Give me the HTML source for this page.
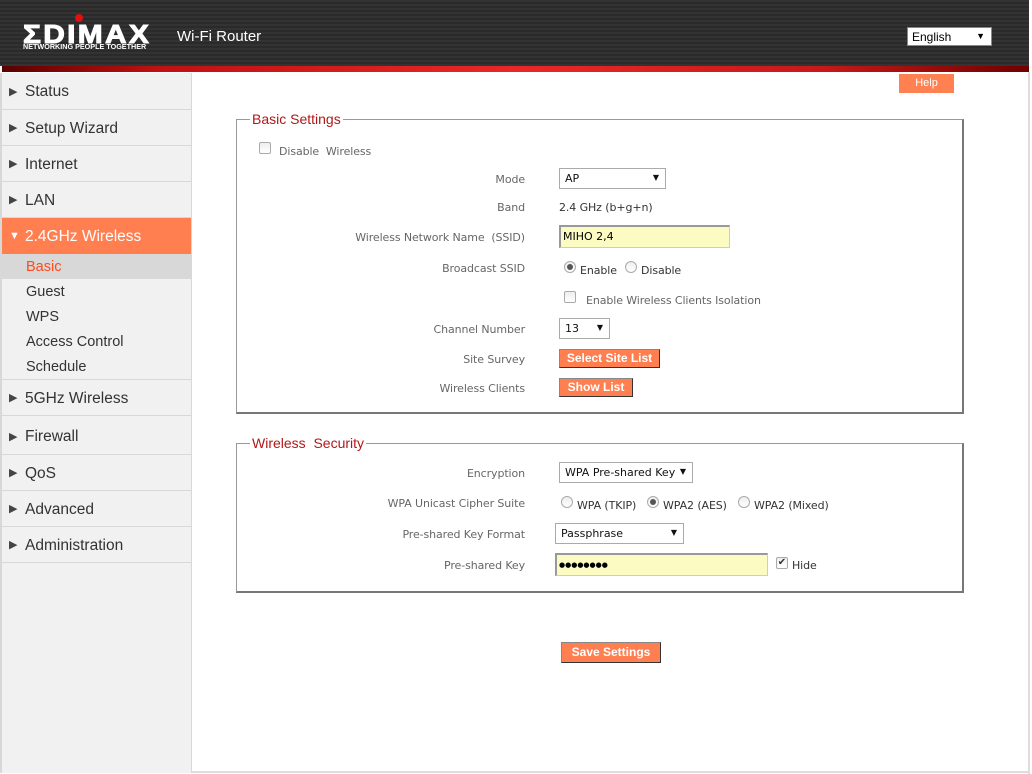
<!DOCTYPE html>
<html><head><meta charset="utf-8"><style>
*{margin:0;padding:0;box-sizing:border-box}
body{width:1032px;height:774px;background:#fff;position:relative;overflow:hidden;font-family:"DejaVu Sans","Liberation Sans",sans-serif}
.a{position:absolute}
#hdr{left:0;top:0;width:1029px;height:66px;background:repeating-linear-gradient(180deg,#333 0,#333 2px,#2a2a2a 2px,#2a2a2a 4px)}
#red{left:2px;top:66px;width:1027px;height:6px;background:linear-gradient(90deg,#5a0000 0,#c01010 15%,#e82828 50%,#c81818 80%,#700000 100%)}
#side{left:0;top:73px;width:192px;height:700px;background:#f1f1f1;border-right:1px solid #d8d8d8;border-left:2px solid #d8d8d8}
.nav{position:absolute;left:2px;width:189px;font-family:"Liberation Sans",sans-serif;font-size:15.5px;color:#333;border-bottom:1px solid #d8d8d8}
.nav span.t{position:absolute;left:7px;font-size:11px;color:#444}
.sub{position:absolute;left:26px;font-family:"Liberation Sans",sans-serif;font-size:14.5px;color:#333}
.lbl{position:absolute;right:507px;font-size:11px;color:#666;white-space:nowrap;letter-spacing:-.1px}
.val{position:absolute;font-size:11px;color:#333;white-space:nowrap;letter-spacing:-.1px}
.fs{position:absolute;border:2px solid #8a8a8a;border-top-width:1px;border-left-width:1px;border-color:#999 #777 #777 #999}
.leg{position:absolute;background:#fff;color:#b01818;font-size:14px;font-family:"Liberation Sans",sans-serif;padding:0 2px}
.sel{position:absolute;border:1px solid #aaa;background:#fff;font-size:11px;color:#111;padding:3px 5px;height:21px}
.sel:after{content:"▼";position:absolute;right:6px;top:4px;font-size:8px}
.btn{position:absolute;background:#ff7f50;color:#fff;font-weight:bold;text-align:center;border:1px solid #888;border-right-color:#333;border-bottom-color:#333;line-height:17px;font-family:"Liberation Sans",sans-serif;font-size:12px}
.rad{position:absolute;width:12px;height:12px;border-radius:50%;border:1px solid #aaa;background:linear-gradient(#eee,#fff)}
.rad.on:after{content:"";position:absolute;left:2px;top:2px;width:6px;height:6px;border-radius:50%;background:#555}
.cb{position:absolute;width:12px;height:12px;border:1px solid #aaa;border-radius:2px;background:linear-gradient(#eee,#fff)}
.inp{position:absolute;background:#fbfbc2;border:1px solid #ccc;border-top:2px solid #999;border-left:2px solid #999;font-size:11px;padding:3px 2px;height:23px}
</style></head><body>
<div id="hdr" class="a"></div>
<div id="red" class="a"></div>
<div class="a" style="left:23px;top:21px;color:#fff;font-family:'Liberation Sans',sans-serif;font-weight:900;font-size:26px;letter-spacing:2px;line-height:26px;transform:scaleX(1.15);transform-origin:left;-webkit-text-stroke:1px #fff">ΣDIMAX</div>
<div class="a" style="left:75px;top:14px;width:8px;height:8px;border-radius:50%;background:#e01010"></div>
<div class="a" style="left:23px;top:44px;color:#fff;font-family:'Liberation Sans',sans-serif;font-weight:bold;font-size:7px;letter-spacing:0px;transform:scaleX(1.03);transform-origin:left">NETWORKING PEOPLE TOGETHER</div>
<div class="a" style="left:177px;top:28px;color:#fff;font-family:'Liberation Sans',sans-serif;font-size:15px">Wi-Fi Router</div>
<div class="a" style="left:907px;top:27px;width:85px;height:19px;background:#fff;border:1px solid #888;padding:2px 4px;font-family:'Liberation Sans',sans-serif;font-size:12px">English<span style="position:absolute;right:6px;top:3px;font-size:9px">▼</span></div>
<div class="btn a" style="left:899px;top:74px;width:55px;height:19px;border:none;font-weight:normal;font-size:11px;line-height:19px;background:#ff8050">Help</div>
<div class="a" style="left:1028px;top:72px;width:2px;height:702px;background:#ddd"></div>
<div class="a" style="left:0;top:771px;width:1030px;height:2px;background:#ddd"></div>

<div id="side" class="a"></div>
<div class="nav" style="top:73px;height:37px;line-height:38px"><span class="t">▶</span><span style="margin-left:23px">Status</span></div>
<div class="nav" style="top:110px;height:36px;line-height:37px"><span class="t">▶</span><span style="margin-left:23px">Setup Wizard</span></div>
<div class="nav" style="top:146px;height:36px;line-height:37px"><span class="t">▶</span><span style="margin-left:23px">Internet</span></div>
<div class="nav" style="top:182px;height:36px;line-height:37px"><span class="t">▶</span><span style="margin-left:23px">LAN</span></div>
<div class="nav" style="top:218px;height:36px;line-height:37px;background:#ff7f50;color:#fff;border:none"><span class="t" style="color:#fff">▼</span><span style="margin-left:23px">2.4GHz Wireless</span></div>
<div class="a" style="left:2px;top:254px;width:189px;height:25px;background:#d8d8d8"></div>
<div class="sub" style="top:259px;color:#ff4a1a">Basic</div>
<div class="sub" style="top:284px">Guest</div>
<div class="sub" style="top:309px">WPS</div>
<div class="sub" style="top:334px">Access Control</div>
<div class="sub" style="top:359px">Schedule</div>
<div class="a" style="left:2px;top:379px;width:189px;height:1px;background:#d8d8d8"></div>
<div class="nav" style="top:380px;height:36px;line-height:37px"><span class="t">▶</span><span style="margin-left:23px">5GHz Wireless</span></div>
<div class="nav" style="top:416px;height:39px;line-height:42px"><span class="t">▶</span><span style="margin-left:23px">Firewall</span></div>
<div class="nav" style="top:455px;height:36px;line-height:37px"><span class="t">▶</span><span style="margin-left:23px">QoS</span></div>
<div class="nav" style="top:491px;height:36px;line-height:37px"><span class="t">▶</span><span style="margin-left:23px">Advanced</span></div>
<div class="nav" style="top:527px;height:36px;line-height:37px"><span class="t">▶</span><span style="margin-left:23px">Administration</span></div>

<div class="fs" style="left:236px;top:119px;width:728px;height:295px"></div>
<div class="leg" style="left:250px;top:111px">Basic Settings</div>
<div class="cb" style="left:259px;top:142px"></div>
<div class="val" style="left:279px;top:145px;color:#666">Disable&nbsp; Wireless</div>
<div class="lbl" style="top:173px">Mode</div>
<div class="sel" style="left:559px;top:168px;width:107px">AP</div>
<div class="lbl" style="top:201px">Band</div>
<div class="val" style="left:559px;top:201px">2.4 GHz (b+g+n)</div>
<div class="lbl" style="top:231px">Wireless Network Name&nbsp; (SSID)</div>
<div class="inp" style="left:559px;top:225px;width:171px">MIHO 2,4</div>
<div class="lbl" style="top:262px">Broadcast SSID</div>
<div class="rad on" style="left:564px;top:261px"></div>
<div class="val" style="left:580px;top:264px">Enable</div>
<div class="rad" style="left:625px;top:261px"></div>
<div class="val" style="left:641px;top:264px">Disable</div>
<div class="cb" style="left:564px;top:291px"></div>
<div class="val" style="left:586px;top:294px;color:#666">Enable Wireless Clients Isolation</div>
<div class="lbl" style="top:323px">Channel Number</div>
<div class="sel" style="left:559px;top:318px;width:51px">13</div>
<div class="lbl" style="top:353px">Site Survey</div>
<div class="btn" style="left:559px;top:349px;width:101px;height:19px">Select Site List</div>
<div class="lbl" style="top:382px">Wireless Clients</div>
<div class="btn" style="left:559px;top:378px;width:74px;height:19px">Show List</div>

<div class="fs" style="left:236px;top:443px;width:728px;height:150px"></div>
<div class="leg" style="left:250px;top:435px">Wireless&nbsp; Security</div>
<div class="lbl" style="top:467px">Encryption</div>
<div class="sel" style="left:559px;top:462px;width:134px">WPA Pre-shared Key&nbsp;&nbsp;</div>
<div class="lbl" style="top:497px">WPA Unicast Cipher Suite</div>
<div class="rad" style="left:561px;top:496px"></div>
<div class="val" style="left:577px;top:499px">WPA (TKIP)</div>
<div class="rad on" style="left:647px;top:496px"></div>
<div class="val" style="left:663px;top:499px">WPA2 (AES)</div>
<div class="rad" style="left:738px;top:496px"></div>
<div class="val" style="left:754px;top:499px">WPA2 (Mixed)</div>
<div class="lbl" style="top:528px">Pre-shared Key Format</div>
<div class="sel" style="left:555px;top:523px;width:129px">Passphrase</div>
<div class="lbl" style="top:559px">Pre-shared Key</div>
<div class="inp" style="left:555px;top:553px;width:213px;letter-spacing:0px;font-size:7px;line-height:15px">●●●●●●●●</div>
<div class="cb" style="left:776px;top:557px;font-size:10px;line-height:10px;text-align:center;color:#333">✔</div>
<div class="val" style="left:792px;top:559px">Hide</div>

<div class="btn" style="left:561px;top:642px;width:100px;height:21px;line-height:19px">Save Settings</div>
</body></html>
